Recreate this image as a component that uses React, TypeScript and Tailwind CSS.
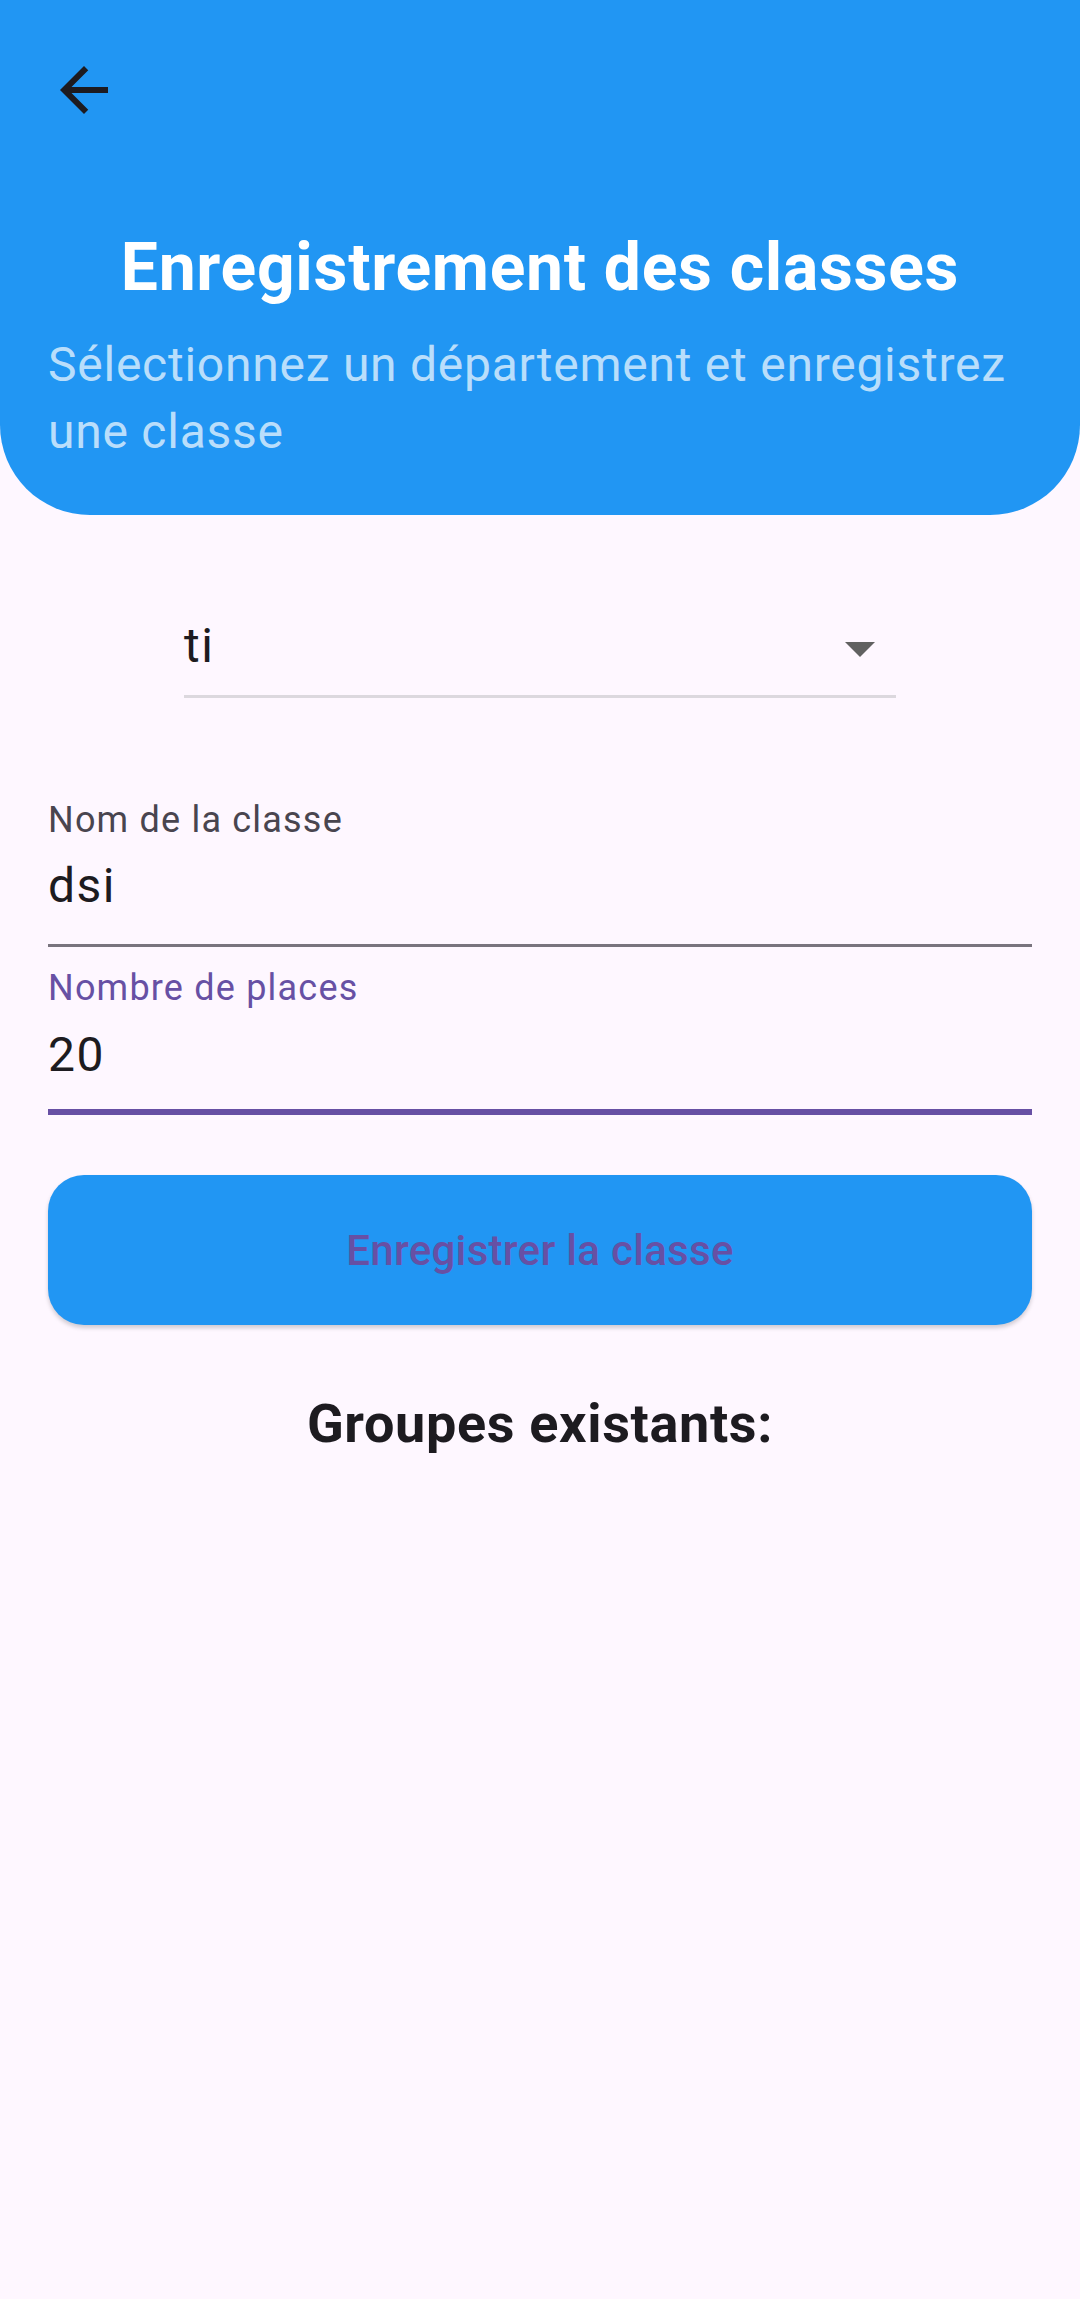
import { useState } from 'react'

const font = { fontFamily: 'Roboto, "Liberation Sans", sans-serif' }

const ArrowBack = () => (
  <svg viewBox="0 0 24 24" className="w-[72px] h-[72px]" fill="#1d1b20">
    <path d="M20 11H7.83l5.59-5.59L12 4l-8 8 8 8 1.41-1.41L7.83 13H20v-2z" />
  </svg>
)

const ArrowDropDown = () => (
  <svg viewBox="0 0 24 24" className="w-[72px] h-[72px] shrink-0" fill="#616161">
    <path d="M7 10l5 5 5-5z" />
  </svg>
)

const Header = () => (
  <header className="bg-[#2196f3] rounded-b-[90px] pt-[54px] pb-[50px]">
    <div className="pl-[48px]">
      <ArrowBack />
    </div>
    <h1 className="mt-[103px] text-center text-white font-bold text-[66px] leading-[77px] tracking-[0.7px]">
      Enregistrement des classes
    </h1>
    <p className="mt-[25px] px-[48px] text-white/70 text-[48px] leading-[67px] tracking-[0.75px]">
      Sélectionnez un département et enregistrez une classe
    </p>
  </header>
)

export default function App() {
  const [department] = useState('ti')
  const [name] = useState('dsi')
  const [seats] = useState('20')

  return (
    <div className="min-h-[2299px] bg-[#fef7ff]" style={font}>
      <Header />

      <div className="mt-[97px] mx-auto w-[712px] pb-[11px] border-b-[3px] border-[#dcd8de]">
        <div className="flex items-start justify-between h-[72px]">
          <span className="mt-[6px] text-[48px] leading-[56px] tracking-[1.5px] text-[#1d1b20]">{department}</span>
          <ArrowDropDown />
        </div>
      </div>

      <div className="px-[48px]">
        {/* Nom de la classe */}
        <div className="mt-[101px] h-[148px] flex flex-col border-b-[3px] border-[#79747e]">
          <label className="text-[36px] leading-[42px] tracking-[1.2px] text-[#49454f]">Nom de la classe</label>
          <span className="mt-[17px] text-[48px] leading-[56px] tracking-[1.5px] text-[#1d1b20]">{name}</span>
        </div>

        {/* Nombre de places (focused) */}
        <div className="mt-[20px] h-[148px] flex flex-col border-b-[6px] border-[#6750a4]">
          <label className="text-[36px] leading-[42px] tracking-[1.2px] text-[#6750a4]">Nombre de places</label>
          <span className="mt-[18px] text-[48px] leading-[56px] tracking-[1.5px] text-[#1d1b20]">{seats}</span>
        </div>

        <button className="mt-[60px] w-full h-[150px] rounded-[36px] bg-[#2196f3] shadow-[0_3px_4px_rgba(0,0,0,0.18)] flex items-center justify-center text-[42px] leading-[49px] font-medium tracking-[0.3px] text-[#6750a4]">
          Enregistrer la classe
        </button>

        <h2 className="mt-[67px] text-center font-bold text-[54px] leading-[63px] tracking-[0.65px] text-[#1d1b20]">
          Groupes existants:
        </h2>
      </div>
    </div>
  )
}
